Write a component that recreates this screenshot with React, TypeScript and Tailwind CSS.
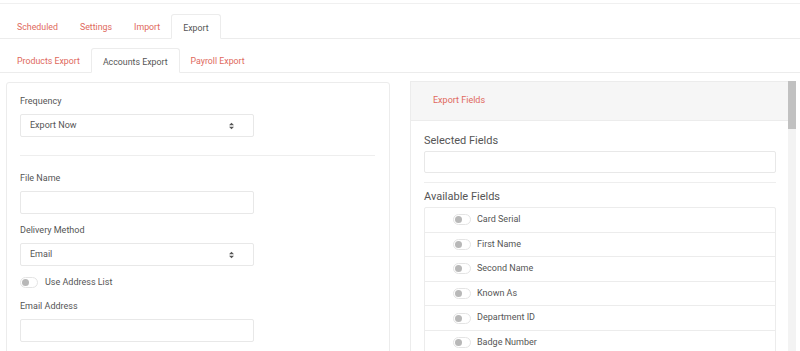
const topTabs = ["Scheduled", "Settings", "Import", "Export"];
const subTabs = ["Products Export", "Accounts Export", "Payroll Export"];
const fields = [
  "Card Serial",
  "First Name",
  "Second Name",
  "Known As",
  "Department ID",
  "Badge Number",
];

function Toggle() {
  return (
    <span className="relative inline-block h-[11px] w-[18px] shrink-0 rounded-full border border-[#e4e4e4] bg-white">
      <span className="absolute left-[1px] top-[1px] h-[7px] w-[7px] rounded-full bg-[#b8b8b8]" />
    </span>
  );
}

function SelectBox({ value }: { value: string }) {
  return (
    <div className="flex h-[23px] w-[234px] items-center justify-between rounded-[2px] border border-[#e8e8e8] px-[9px] text-[9px] text-[#555]">
      <span>{value}</span>
      <svg width="5" height="8" viewBox="0 0 6 8" className="mr-[10px]">
        <path d="M3 0 L6 3 H0 Z" fill="#555" />
        <path d="M0 5 H6 L3 8 Z" fill="#555" />
      </svg>
    </div>
  );
}

function Field({ label, children }: { label: string; children: React.ReactNode }) {
  return (
    <div className="flex flex-col">
      <label className="mb-[6px] text-[9px] leading-[13px] text-[#555]">{label}</label>
      {children}
    </div>
  );
}

function Tab({ label, active }: { label: string; active: boolean }) {
  return active ? (
    <div className="-mb-px flex h-[25px] items-center rounded-t-[3px] border border-b-white border-[#ececec] bg-white px-[11px] pt-[4px] text-[8.8px] text-[#555]">
      {label}
    </div>
  ) : (
    <div className="flex h-[25px] items-center px-[11px] pt-[4px] text-[8.8px] text-[#e0695d]">
      {label}
    </div>
  );
}

export default function App() {
  return (
    <div
      className="h-[351px] w-[800px] overflow-hidden bg-white"
      style={{ fontFamily: "Roboto, 'Liberation Sans', sans-serif" }}
    >
      {/* top strip */}
      <div className="h-[4px] border-b border-[#f0f0f0]" />

      {/* main tabs */}
      <div className="mt-[10px] flex h-[25px] items-end border-b border-[#ececec] pl-[6px]">
        {topTabs.map((t) => (
          <Tab key={t} label={t} active={t === "Export"} />
        ))}
      </div>

      {/* sub tabs */}
      <div className="mt-[9px] flex h-[25px] items-end border-b border-[#ececec] pl-[6px]">
        {subTabs.map((t) => (
          <Tab key={t} label={t} active={t === "Accounts Export"} />
        ))}
      </div>

      <div className="mt-[9px] flex items-start">
        {/* left card */}
        <div className="ml-[6px] h-[300px] w-[384px] rounded-[3px] border border-[#ececec] px-[13px] pt-[12px]">
          <Field label="Frequency">
            <SelectBox value="Export Now" />
          </Field>
          <div className="mb-[16px] mr-[1px] mt-[18px] border-t border-[#eeeeee]" />
          <div className="flex flex-col gap-[10px]">
            <Field label="File Name">
              <div className="h-[23px] w-[234px] rounded-[2px] border border-[#e8e8e8]" />
            </Field>
            <Field label="Delivery Method">
              <SelectBox value="Email" />
            </Field>
          </div>
          <div className="mt-[10px] flex items-center gap-[7px]">
            <Toggle />
            <span className="text-[9px] text-[#555]">Use Address List</span>
          </div>
          <div className="mt-[10px]">
            <Field label="Email Address">
              <div className="h-[23px] w-[234px] rounded-[2px] border border-[#e8e8e8]" />
            </Field>
          </div>
        </div>

        {/* right card */}
        <div className="-mt-[1px] ml-[20px] flex">
          <div className="h-[300px] w-[378px] border-l border-t border-[#ececec]">
            <div className="flex h-[39px] items-center border-b border-[#ececec] bg-[#f6f6f6] pl-[22px] text-[9px] text-[#e0695d]">
              Export Fields
            </div>
            <div className="pl-[13px] pr-[12px] pt-[12px]">
              <div className="mb-[2px] text-[11px] leading-[16px] text-[#555]">Selected Fields</div>
              <div className="h-[22px] rounded-[2px] border border-[#e8e8e8]" />
              <div className="mb-[6px] mt-[9px] border-t border-[#eeeeee]" />
              <div className="mb-[2px] text-[11px] leading-[16px] text-[#555]">Available Fields</div>
              <div className="rounded-[2px] border border-[#ececec]">
                {fields.map((f) => (
                  <div
                    key={f}
                    className="flex h-[24.6px] items-center gap-[6px] border-b border-[#ececec] pl-[28px] text-[9px] text-[#555]"
                  >
                    <Toggle />
                    <span>{f}</span>
                  </div>
                ))}
              </div>
            </div>
          </div>
          {/* scrollbar */}
          <div className="h-[300px] w-[8px] bg-[#f3f3f3]">
            <div className="h-[48px] w-[8px] bg-[#c1c1c1]" />
          </div>
        </div>
      </div>
    </div>
  );
}
